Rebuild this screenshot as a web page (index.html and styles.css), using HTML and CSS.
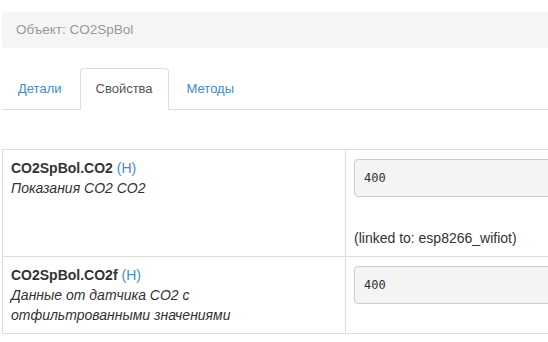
FILE: index.html
```html
<!DOCTYPE html>
<html lang="ru">
<head>
  <meta charset="UTF-8" />
  <title>Объект: CO2SpBol</title>
  <link rel="stylesheet" href="styles.css">
</head>
<body>
  <div class="page">
    <div class="breadcrumb">Объект: CO2SpBol</div>

    <ul class="tabs">
      <li><a href="#">Детали</a></li>
      <li class="active"><a href="#">Свойства</a></li>
      <li><a href="#">Методы</a></li>
    </ul>

    <div class="tab-content">
      <table class="props">
        <tr>
          <td class="prop-name">
            <b>CO2SpBol.CO2</b> <span class="type">(H)</span>
            <i class="descr">Показания CO2 CO2</i>
          </td>
          <td class="prop-value">
            <div class="value-box">400</div>
            <div class="linked">(linked to: esp8266_wifiot)</div>
          </td>
        </tr>
        <tr>
          <td class="prop-name">
            <b>CO2SpBol.CO2f</b> <span class="type">(H)</span>
            <i class="descr">Данные от датчика CO2 с отфильтрованными значениями</i>
          </td>
          <td class="prop-value">
            <div class="value-box">400</div>
          </td>
        </tr>
      </table>
    </div>
  </div>
</body>
</html>
```

FILE: styles.css
```css
html, body {
  overflow: hidden;
}
body {
  margin: 0;
  font-family: "Liberation Sans", Arial, sans-serif;
  font-size: 14px;
  line-height: 20px;
  color: #333;
  background: #fff;
}
.page {
  width: 760px;
  padding: 12px 0 0 2px;
}
.breadcrumb {
  padding: 8px 14px;
  background: #f5f5f5;
  border-radius: 4px;
  color: #999;
  font-size: 13.5px;
  margin-bottom: 20px;
}
.tabs {
  display: flex;
  list-style: none;
  margin: 0;
  padding: 0;
  border-bottom: 1px solid #ddd;
  font-size: 13px;
}
.tabs li {
  margin-right: 2px;
  margin-bottom: -1px;
}
.tabs a {
  display: block;
  padding: 10px 15px;
  color: #428bca;
  text-decoration: none;
  border: 1px solid transparent;
  border-radius: 4px 4px 0 0;
}
.tabs .active a {
  color: #555;
  background: #fff;
  border-color: #ddd #ddd transparent;
}
.tab-content {
  padding-top: 39px;
}
.props {
  width: 100%;
  border-collapse: collapse;
  border: 1px solid #ddd;
}
.props td {
  padding: 8px;
  border: 1px solid #ddd;
  vertical-align: top;
}
.props .prop-name {
  width: 326px;
}
.type {
  color: #428bca;
}
.descr {
  display: block;
  max-width: 240px;
}
.value-box {
  height: 36px;
  margin-top: 1px;
  padding: 0 9px;
  border: 1px solid #ccc;
  border-radius: 4px;
  background: #f4f4f4;
  font-family: "DejaVu Sans Mono", "Liberation Mono", monospace;
  font-size: 12px;
  line-height: 36px;
  color: #333;
}
.linked {
  margin-top: 31px;
}
```
